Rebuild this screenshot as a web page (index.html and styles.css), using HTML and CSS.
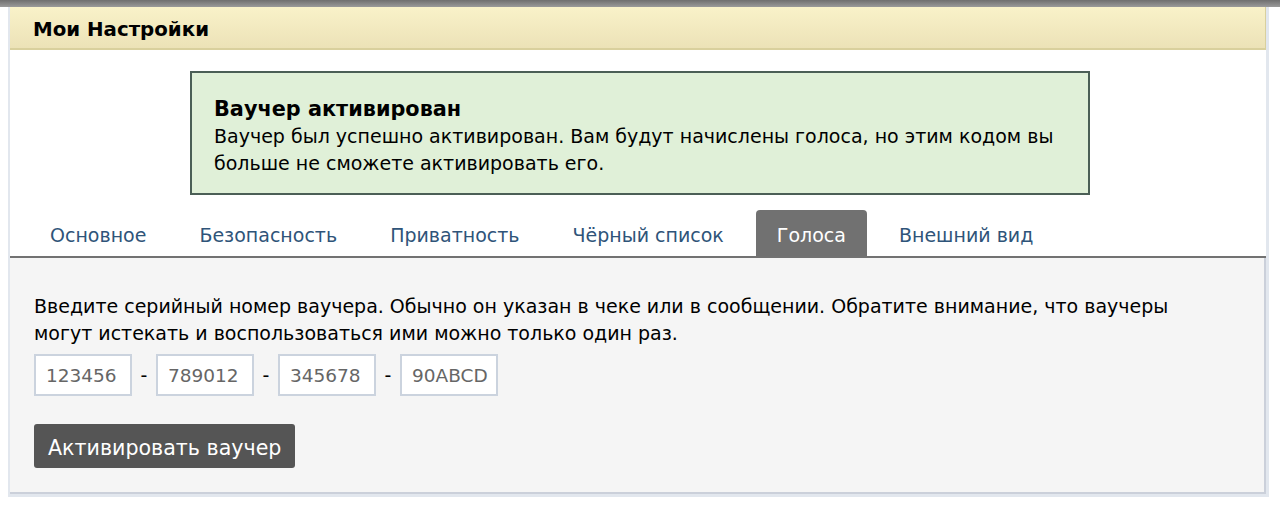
FILE: index.html
```html
<!DOCTYPE html>
<html lang="ru">
<head>
  <meta charset="UTF-8">
  <title>Мои Настройки</title>
  <link rel="stylesheet" href="styles.css">
</head>
<body>
  <div class="topbar"></div>

  <div class="page">
    <div class="panel">
      <div class="panel-head">Мои Настройки</div>

      <div class="panel-body">
        <div class="notice">
          <div class="notice-title">Ваучер активирован</div>
          <div>Ваучер был успешно активирован. Вам будут начислены голоса, но этим кодом вы больше не сможете активировать его.</div>
        </div>

        <div class="tabs">
          <a class="tab">Основное</a>
          <a class="tab">Безопасность</a>
          <a class="tab">Приватность</a>
          <a class="tab">Чёрный список</a>
          <a class="tab active">Голоса</a>
          <a class="tab">Внешний вид</a>
        </div>

        <div class="tab-content">
          <p class="hint">Введите серийный номер ваучера. Обычно он указан в чеке или в сообщении. Обратите внимание, что ваучеры могут истекать и воспользоваться ими можно только один раз.</p>

          <div class="code-row">
            <input type="text" class="code" placeholder="123456">
            <span class="dash">-</span>
            <input type="text" class="code" placeholder="789012">
            <span class="dash">-</span>
            <input type="text" class="code" placeholder="345678">
            <span class="dash">-</span>
            <input type="text" class="code" placeholder="90ABCD">
          </div>

          <button class="button">Активировать ваучер</button>
        </div>
      </div>
    </div>
  </div>
</body>
</html>
```

FILE: styles.css
```css
body {
  margin: 0;
  padding: 0;
  background: #fff;
  color: #000;
  font-family: "DejaVu Sans", Verdana, sans-serif;
  font-size: 19px;
}

.topbar {
  height: 7px;
  background: linear-gradient(#6f6f6f, #9a9a9a);
}

.page {
  padding: 0 11px 14px 8px;
}

/* Settings panel */
.panel {
  border-left: 2px solid #e2e7ee;
  border-right: 3px solid #e2e7ee;
  border-bottom: 3px solid #e2e7ee;
}

.panel-head {
  height: 41px;
  line-height: 45px;
  padding-left: 23px;
  font-weight: bold;
  font-size: 19.8px;
  background: linear-gradient(#f9f2c9, #ece2b7);
  border-bottom: 2px solid #d9d09d;
  border-right: 1px solid #d9d09d;
}

.panel-body {
  background: #fff;
}

.notice {
  margin: 21px 0 0 180px;
  padding: 23px 22px 16px;
  box-sizing: border-box;
  width: 900px;
  background: #e0f0d8;
  border: 2px solid #4b5f56;
  line-height: 27px;
}

.notice-title {
  font-weight: bold;
  font-size: 20.8px;
}

/* Tabs */
.tabs {
  display: flex;
  gap: 11px;
  margin-top: 15px;
  padding-left: 19px;
  border-bottom: 2px solid #727272;
}

.tab {
  display: block;
  height: 46px;
  line-height: 51px;
  padding: 0 21px;
  color: #2f5479;
  border-radius: 4px 4px 0 0;
  cursor: pointer;
}

.tab.active {
  background: #717171;
  color: #fff;
}

.tab-content {
  background: #f5f5f5;
  padding: 35px 24px 24px;
  border-right: 2px solid #cbd0da;
  border-bottom: 2px solid #cbd0da;
}

.hint {
  margin: 0;
  max-width: 1180px;
  line-height: 27px;
}

.code-row {
  display: flex;
  align-items: center;
  margin-top: 7px;
}

.code {
  width: 98px;
  height: 42px;
  box-sizing: border-box;
  padding: 0 0 0 10px;
  border: 2px solid #cbd3de;
  background: #fff;
  font-family: inherit;
  font-size: 18.5px;
  color: #666;
}

.code::placeholder {
  color: #666;
}

.dash {
  width: 24px;
  text-align: center;
}

.button {
  display: block;
  margin-top: 28px;
  height: 44px;
  padding: 4px 14px 0;
  background: #555;
  color: #fff;
  font-family: inherit;
  font-size: 20.6px;
  border: none;
  border-radius: 3px;
  cursor: pointer;
}
```
